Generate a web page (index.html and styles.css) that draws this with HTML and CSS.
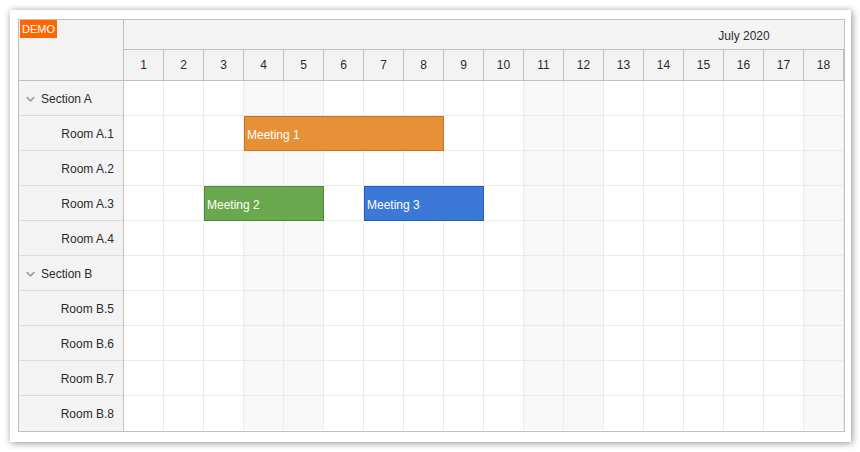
FILE: index.html
```html
<!DOCTYPE html>
<html>
<head>
<meta charset="utf-8">
<link rel="stylesheet" href="styles.css">
</head>
<body>
<div class="frame">
  <div class="scheduler">
    <div class="corner"><span class="demo">DEMO</span></div>
    <div class="timeheader">
      <div class="month"><div class="month-inner">July 2020</div></div>
      <div class="days">
        <div class="day">1</div><div class="day">2</div><div class="day">3</div><div class="day">4</div><div class="day">5</div><div class="day">6</div><div class="day">7</div><div class="day">8</div><div class="day">9</div><div class="day">10</div><div class="day">11</div><div class="day">12</div><div class="day">13</div><div class="day">14</div><div class="day">15</div><div class="day">16</div><div class="day">17</div><div class="day">18</div>
      </div>
    </div>
    <div class="rowheaders">
      <div class="rh section"><svg class="chev" width="9" height="6" viewBox="0 0 9 6"><polyline points="0.7,1 4.5,4.8 8.3,1" fill="none" stroke="#9a9a9a" stroke-width="1.6"/></svg>Section A</div>
      <div class="rh room">Room A.1</div>
      <div class="rh room">Room A.2</div>
      <div class="rh room">Room A.3</div>
      <div class="rh room">Room A.4</div>
      <div class="rh section"><svg class="chev" width="9" height="6" viewBox="0 0 9 6"><polyline points="0.7,1 4.5,4.8 8.3,1" fill="none" stroke="#9a9a9a" stroke-width="1.6"/></svg>Section B</div>
      <div class="rh room">Room B.5</div>
      <div class="rh room">Room B.6</div>
      <div class="rh room">Room B.7</div>
      <div class="rh room last">Room B.8</div>
    </div>
    <div class="body" id="body"></div>
  </div>
</div>
<script src="script.js"></script>
</body>
</html>
```
FILE: styles.css
```css
html, body {
  margin: 0;
  padding: 0;
  background: #ffffff;
}
body {
  font-family: "Liberation Sans", Arial, sans-serif;
  font-size: 12px;
  color: #2b2b2b;
}
.frame {
  margin: 10px;
  width: 841px;
  height: 432px;
  box-sizing: border-box;
  padding: 9px 0 0 8px;
  background: #ffffff;
  box-shadow: 1px 1px 7px rgba(0, 0, 0, 0.45);
}
.scheduler {
  display: grid;
  grid-template-columns: 105px 720px;
  width: 827px;
  box-sizing: border-box;
  border: 1px solid #c0c0c0;
  background: #ffffff;
}
.corner {
  background: #f3f3f3;
  border-right: 1px solid #c0c0c0;
  border-bottom: 1px solid #c0c0c0;
  height: 60px;
  padding: 0 0 0 1px;
}
.demo {
  display: block;
  background: #ff6600;
  color: #ffffff;
  font-size: 11px;
  line-height: 19px;
  height: 18px;
  width: 37px;
  text-align: center;
}
.timeheader {
  background: #f3f3f3;
}
.month {
  height: 29px;
  border-bottom: 1px solid #c0c0c0;
  overflow: hidden;
}
.month-inner {
  width: 1240px;
  text-align: center;
  line-height: 32px;
}
.days {
  display: flex;
  border-bottom: 1px solid #c0c0c0;
}
.day {
  width: 39px;
  height: 30px;
  line-height: 31px;
  text-align: center;
  border-right: 1px solid #c0c0c0;
}
.rowheaders {
  background: #f3f3f3;
  border-right: 1px solid #c0c0c0;
}
.rh {
  height: 32px;
  padding-top: 2px;
  border-bottom: 1px solid #dcdcdc;
  display: flex;
  align-items: center;
}
.rh.last {
  border-bottom: none;
}
.section {
  padding-left: 7px;
}
.chev {
  margin-right: 6px;
  margin-top: -1px;
}
.room {
  justify-content: flex-end;
  padding-right: 9px;
}
.brow {
  display: flex;
  position: relative;
  height: 35px;
}
.bcell {
  width: 39px;
  height: 34px;
  border-right: 1px solid #ebebeb;
  border-bottom: 1px solid #ebebeb;
  background: #ffffff;
}
.brow.last .bcell {
  border-bottom: none;
}
.bcell.weekend {
  background: #f8f8f8;
}
.event {
  position: absolute;
  top: 0;
  height: 35px;
  box-sizing: border-box;
  color: #ffffff;
  line-height: 36px;
  padding-left: 2px;
  font-size: 12px;
}
.ev-orange {
  background: #e69138;
  border: 1px solid #c27422;
}
.ev-green {
  background: #6aa84f;
  border: 1px solid #4a8a33;
}
.ev-blue {
  background: #3c78d8;
  border: 1px solid #1f5fc2;
}
```
FILE: script.js
```js
(function () {
  var body = document.getElementById('body');
  var weekend = [4, 5, 11, 12, 18];
  var events = {
    1: [{ s: 4, e: 8, t: 'Meeting 1', c: 'ev-orange' }],
    3: [{ s: 3, e: 5, t: 'Meeting 2', c: 'ev-green' }, { s: 7, e: 9, t: 'Meeting 3', c: 'ev-blue' }]
  };
  for (var r = 0; r < 10; r++) {
    var row = document.createElement('div');
    row.className = 'brow' + (r === 9 ? ' last' : '');
    for (var d = 1; d <= 18; d++) {
      var c = document.createElement('div');
      c.className = 'bcell' + (weekend.indexOf(d) >= 0 ? ' weekend' : '');
      row.appendChild(c);
    }
    (events[r] || []).forEach(function (ev) {
      var e = document.createElement('div');
      e.className = 'event ' + ev.c;
      e.style.left = ((ev.s - 1) * 40) + 'px';
      e.style.width = ((ev.e - ev.s + 1) * 40) + 'px';
      e.textContent = ev.t;
      row.appendChild(e);
    });
    body.appendChild(row);
  }
})();
```
